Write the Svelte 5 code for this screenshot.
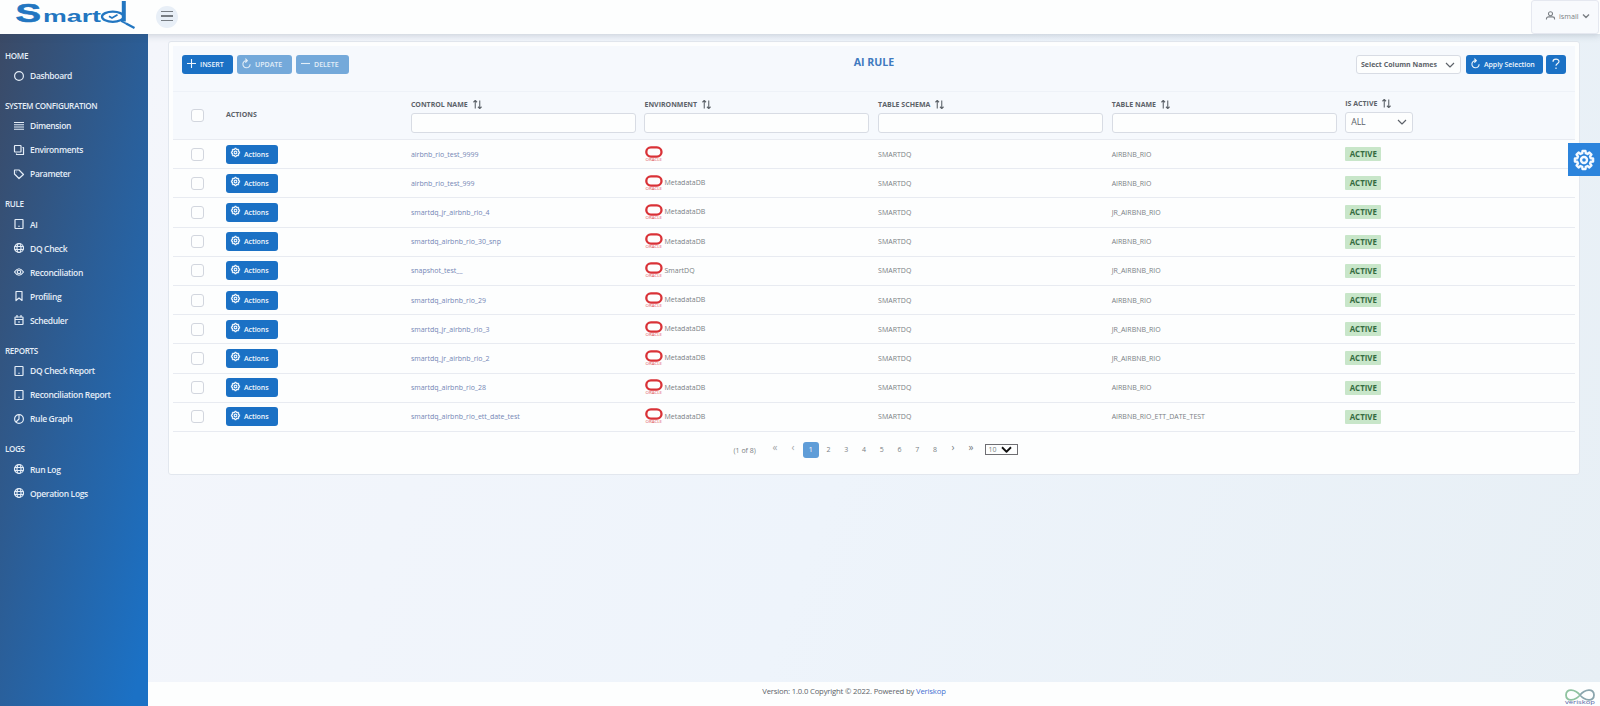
<script lang="ts">
  const menu = [
    { title: 'HOME', items: [['Dashboard', 'circle']] },
    {
      title: 'SYSTEM CONFIGURATION',
      items: [
        ['Dimension', 'bars'],
        ['Environments', 'clone'],
        ['Parameter', 'tag']
      ]
    },
    {
      title: 'RULE',
      items: [
        ['AI', 'tablet'],
        ['DQ Check', 'globe'],
        ['Reconciliation', 'eye'],
        ['Profiling', 'bookmark'],
        ['Scheduler', 'calendar']
      ]
    },
    {
      title: 'REPORTS',
      items: [
        ['DQ Check Report', 'tablet'],
        ['Reconciliation Report', 'tablet'],
        ['Rule Graph', 'chart']
      ]
    },
    {
      title: 'LOGS',
      items: [
        ['Run Log', 'globe'],
        ['Operation Logs', 'globe']
      ]
    }
  ];

  const columns = ['CONTROL NAME', 'ENVIRONMENT', 'TABLE SCHEMA', 'TABLE NAME'];

  const rows = [
    { name: 'airbnb_rio_test_9999', env: '', table: 'AIRBNB_RIO' },
    { name: 'airbnb_rio_test_999', env: 'MetadataDB', table: 'AIRBNB_RIO' },
    { name: 'smartdq_jr_airbnb_rio_4', env: 'MetadataDB', table: 'JR_AIRBNB_RIO' },
    { name: 'smartdq_airbnb_rio_30_snp', env: 'MetadataDB', table: 'AIRBNB_RIO' },
    { name: 'snapshot_test__', env: 'SmartDQ', table: 'JR_AIRBNB_RIO' },
    { name: 'smartdq_airbnb_rio_29', env: 'MetadataDB', table: 'AIRBNB_RIO' },
    { name: 'smartdq_jr_airbnb_rio_3', env: 'MetadataDB', table: 'JR_AIRBNB_RIO' },
    { name: 'smartdq_jr_airbnb_rio_2', env: 'MetadataDB', table: 'JR_AIRBNB_RIO' },
    { name: 'smartdq_airbnb_rio_28', env: 'MetadataDB', table: 'AIRBNB_RIO' },
    { name: 'smartdq_airbnb_rio_ett_date_test', env: 'MetadataDB', table: 'AIRBNB_RIO_ETT_DATE_TEST' }
  ];

  const pages = [1, 2, 3, 4, 5, 6, 7, 8];
  let page = $state(1);

  // 8 rounded teeth around the hub
  const gear = (function () {
    const p: string[] = [];
    for (let i = 0; i < 8; i++) {
      for (const [r, d] of [[7, -15], [9.2, -9], [9.2, 9], [7, 15]]) {
        const a = ((i * 45 + d) * Math.PI) / 180;
        p.push(`${(10 + r * Math.cos(a)).toFixed(2)},${(10 + r * Math.sin(a)).toFixed(2)}`);
      }
    }
    return p.join(' ');
  })();
</script>

{#snippet icon(name: string)}
  <svg class="icon {name}" viewBox="0 0 20 20">
    {#if name === 'circle'}
      <circle cx="10" cy="10" r="8.8" />
    {:else if name === 'bars'}
      <path d="M0 3h20M0 7.500h20M0 12h20M0 16.500h20" />
    {:else if name === 'clone'}
      <rect x="1" y="1" width="13" height="13" rx="1" />
      <path d="M17 5h2v14H5v-2" />
    {:else if name === 'tag'}
      <path d="M1 2v8l9 9 9-8-9-9z" />
      <path d="M5 6h1" />
    {:else if name === 'tablet'}
      <rect x="2" y="1" width="16" height="18" rx="1" />
      <path d="M8.500 14.500h3" />
    {:else if name === 'globe'}
      <circle cx="10" cy="10" r="9" />
      <ellipse cx="10" cy="10" rx="4" ry="9" />
      <path d="M1 7h18M1 13h18" />
    {:else if name === 'eye'}
      <path d="M1 10q9-13 18 0-9 13-18 0z" />
      <circle cx="10" cy="10" r="3.5" />
    {:else if name === 'bookmark'}
      <path d="M4 1h12v18l-6-5-6 5z" />
    {:else if name === 'calendar'}
      <rect x="2" y="4" width="16" height="15" rx="1" />
      <path d="M2 9h16M6 0v5M14 0v5M8 14h4" />
    {:else if name === 'chart'}
      <circle cx="10" cy="10" r="8.8" />
      <path d="M10 1v9l-6 6" />
    {:else if name === 'gear'}
      <polygon points={gear} />
      <circle cx="10" cy="10" r="3" />
    {:else if name === 'plus'}
      <path d="M10 0v20M0 10h20" />
    {:else if name === 'minus'}
      <path d="M0 10h20" />
    {:else if name === 'refresh'}
      <path d="M18 11.500A8 8 0 1 1 11 3.600M7.500-1l4.500 4.600-4.500 4.600" />
    {:else if name === 'sort'}
      <path d="M5 19V1M1 5l4-4 4 4M15 1v18M11 15l4 4 4-4" />
    {:else if name === 'down'}
      <path d="M0 5l10 10L20 5" />
    {:else if name === 'user'}
      <circle cx="10" cy="6" r="4.500" />
      <path d="M1 19v-2q0-4 5-4h8q5 0 5 4v2" />
    {:else if name === 'help'}
      <path d="M4 5.500c0-7 12-7 12-.5 0 4-6 4-6 8.500M10 17v3" />
    {/if}
  </svg>
{/snippet}

<div class="layout">
  <header>
    <svg class="logo" viewBox="0 0 122 32">
      <text class="big" x="0.500" y="22.300" textLength="25.500" lengthAdjust="spacingAndGlyphs">S</text>
      <text class="small" x="28" y="22.300" textLength="58" lengthAdjust="spacingAndGlyphs">mart</text>
      <ellipse cx="97.800" cy="16.700" rx="10.800" ry="5.100" />
      <path class="stem" d="M108.800 1v20.500" />
      <path class="handle" d="M106 21l5 2.500" />
      <path class="grip" d="M111 23.500l8.500 4.500" />
      <path class="tick" d="M94 16.200l3 1.800 5.500-3.200" />
    </svg>
    <button class="toggle" aria-label="Toggle menu">
      <span></span><span></span><span></span>
    </button>
    <div class="account">
      {@render icon('user')}
      <span>ismail</span>
      {@render icon('down')}
    </div>
  </header>

  <div class="body">
    <nav>
      {#each menu as group}
        <section>
          <h4>{group.title}</h4>
          {#each group.items as [label, glyph]}
            <a href="#top">{@render icon(glyph)}<span>{label}</span></a>
          {/each}
        </section>
      {/each}
    </nav>

    <div class="page">
      <main>
        <div class="card">
          <div class="toolbar">
            <div class="tools">
              <button class="btn insert">{@render icon('plus')}INSERT</button>
              <button class="btn update" disabled>{@render icon('refresh')}UPDATE</button>
              <button class="btn delete" disabled>{@render icon('minus')}DELETE</button>
            </div>
            <h1>AI RULE</h1>
            <div class="tools right">
              <div class="select names"><span>Select Column Names</span>{@render icon('down')}</div>
              <button class="btn apply">{@render icon('refresh')}Apply Selection</button>
              <button class="btn ask" aria-label="Help">{@render icon('help')}</button>
            </div>
          </div>

          <div class="row head">
            <div class="pick"><i class="check"></i></div>
            <div class="title actions">ACTIONS</div>
            {#each columns as column}
              <div class="filter">
                <div class="title">{column}{@render icon('sort')}</div>
                <input aria-label={column} />
              </div>
            {/each}
            <div class="filter state">
              <div class="title">IS ACTIVE{@render icon('sort')}</div>
              <div class="select all"><span>ALL</span>{@render icon('down')}</div>
            </div>
          </div>

          {#each rows as row}
            <div class="row">
              <div class="pick"><i class="check"></i></div>
              <div><button class="btn action">{@render icon('gear')}Actions</button></div>
              <div class="name">{row.name}</div>
              <div class="env">
                <svg class="oracle" viewBox="0 0 18 16">
                  <rect x="1.800" y="1.400" width="15.200" height="9.200" rx="4.600" />
                  <text x="1" y="15.400" textLength="16.500" lengthAdjust="spacingAndGlyphs">ORACLE</text>
                </svg>
                <span>{row.env}</span>
              </div>
              <div class="cell">SMARTDQ</div>
              <div class="cell">{row.table}</div>
              <div><span class="badge">ACTIVE</span></div>
            </div>
          {/each}

          <div class="paginator">
            <span class="count">(1 of 8)</span>
            <span class="arrow off">«</span>
            <span class="arrow off">‹</span>
            {#each pages as n}
              <button class="num" class:current={n === page} onclick={() => (page = n)}>{n}</button>
            {/each}
            <span class="arrow">›</span>
            <span class="arrow">»</span>
            <div class="size"><span>10</span>{@render icon('down')}</div>
          </div>
        </div>
      </main>

      <footer>
        <p>Version: 1.0.0 Copyright © 2022. Powered by <a href="#top">Veriskop</a></p>
        <svg class="veriskop" viewBox="0 0 32 18">
          <path class="loop-a" d="M16 7C11 1 2 0 2 7s9 6 14 0" />
          <path class="loop-b" d="M16 7c5-6 14-7 14 0s-9 6-14 0" />
          <text x="1" y="15.500" textLength="30" lengthAdjust="spacingAndGlyphs">veriskop</text>
        </svg>
      </footer>
    </div>
  </div>

  <button class="config" aria-label="Settings">{@render icon('gear')}</button>
</div>

<style>
  :global(body) {
    margin: 0;
  }

  .layout {
    height: 706px;
    display: flex;
    flex-direction: column;
    overflow: hidden;
    font-family: 'Open Sans', sans-serif;
    font-size: 8px;
    color: #7a7f84;
  }

  button {
    font-family: inherit;
    border: 0;
    padding: 0;
    white-space: nowrap;
  }

  .icon {
    width: 10px;
    height: 10px;
    flex: none;
    fill: none;
    stroke: currentColor;
    stroke-width: 2.4;
    stroke-linejoin: round;
    overflow: visible;
  }

  header {
    height: 34px;
    flex: none;
    display: flex;
    align-items: center;
    background: #fdfefe;
    box-shadow: 0 1px 7px rgba(60, 70, 100, 0.25);
    z-index: 2;
  }

  .logo {
    width: 122px;
    height: 32px;
    margin: 0 0 2px 15px;
    overflow: visible;
    fill: #2276c1;
    font-family: 'Liberation Sans', sans-serif;
    font-weight: bold;
  }

  .logo .big {
    font-size: 25px;
    stroke: #2276c1;
    stroke-width: 0.6;
  }

  .logo .small {
    font-size: 17px;
  }

  .logo ellipse,
  .logo path {
    fill: none;
    stroke: #2276c1;
    stroke-width: 2.3;
  }

  .logo .stem {
    stroke-width: 4;
  }

  .logo .tick,
  .logo .handle {
    stroke-width: 1.8;
  }

  .toggle {
    width: 22px;
    height: 22px;
    margin-left: 18.5px;
    border-radius: 50%;
    background: #e8eff7;
    display: flex;
    flex-direction: column;
    align-items: center;
    justify-content: center;
    gap: 3px;
    padding-bottom: 2px;
  }

  .toggle span {
    width: 12px;
    height: 1.3px;
    background: #777d83;
  }

  .account {
    box-sizing: border-box;
    width: 68px;
    height: 34px;
    margin-left: auto;
    margin-right: 1px;
    padding: 0 9px 2px 14px;
    display: flex;
    align-items: center;
    gap: 4px;
    border: 1px solid #e5e8f0;
    border-radius: 3px;
    background: #f8fafd;
    font-size: 7.2px;
  }

  .account .down {
    width: 6px;
    height: 6px;
    margin-left: auto;
    stroke-width: 4.5;
  }

  .account .user {
    width: 9px;
    height: 9px;
    margin-bottom: 2px;
  }

  .body {
    flex: 1;
    display: flex;
    min-height: 0;
  }

  nav {
    width: 148px;
    flex: none;
    box-sizing: border-box;
    padding-top: 13.5px;
    background: linear-gradient(104deg, #3b4a66 0%, #2a5f9a 50%, #1b71c5 95%);
    color: #e4edf7;
  }

  section {
    margin-bottom: 10.1px;
  }

  h4 {
    margin: 0;
    padding-left: 5px;
    font-size: 8.1px;
    font-weight: 600;
    letter-spacing: -0.34px;
    line-height: 16px;
    white-space: nowrap;
  }

  nav a {
    height: 24.1px;
    display: flex;
    align-items: center;
    gap: 6px;
    padding-left: 14px;
    font-size: 8.5px;
    font-weight: 600;
    letter-spacing: -0.34px;
    color: inherit;
    text-decoration: none;
    white-space: nowrap;
  }

  .bars {
    stroke-width: 2.2;
  }

  .page {
    flex: 1;
    display: flex;
    flex-direction: column;
    min-width: 0;
    background: linear-gradient(110deg, #f4f6fb 0%, #eef4fb 50%, #e7eff5 100%);
  }

  main {
    flex: 1;
    padding: 7px 20px 0;
  }

  .card {
    box-sizing: border-box;
    height: 434px;
    padding: 4px 4px 0;
    border: 1px solid #e2e7ee;
    border-radius: 3px;
    background: #fdfefe;
  }

  .toolbar {
    box-sizing: border-box;
    height: 46px;
    display: grid;
    grid-template-columns: 1fr auto 1fr;
    align-items: start;
    padding: 9px 9px 0;
    border-bottom: 1px solid #eef2f8;
    background: #f6f9fd;
  }

  .tools {
    display: flex;
    gap: 4px;
  }

  .right {
    justify-content: flex-end;
    gap: 3px;
  }

  h1 {
    margin: 0;
    font-size: 10.6px;
    font-weight: 700;
    line-height: 15px;
    color: #3f7ac0;
  }

  .btn {
    box-sizing: border-box;
    height: 19px;
    display: flex;
    align-items: center;
    gap: 4px;
    padding: 0 5px;
    border-radius: 3px;
    background: #1b71c5;
    color: #f0f6fc;
    font-size: 7px;
    font-weight: 600;
  }

  .btn .icon {
    width: 9px;
    height: 9px;
    margin-bottom: 3px;
  }

  .btn:disabled {
    background: #74a9da;
    color: #e3eef8;
  }

  .insert {
    width: 51px;
  }

  .update {
    width: 55px;
  }

  .delete {
    width: 53px;
  }

  .apply {
    width: 77px;
    margin-left: 2px;
    letter-spacing: -0.06px;
  }

  .ask {
    width: 20px;
    justify-content: center;
  }

  .ask .help {
    width: 10px;
    height: 10px;
    margin-bottom: 1px;
  }

  .action {
    width: 52px;
    letter-spacing: -0.05px;
  }

  .select {
    box-sizing: border-box;
    display: flex;
    align-items: center;
    justify-content: space-between;
    border: 1px solid #d8dce4;
    border-radius: 3px;
    background: #fdfefe;
    color: #5c6269;
  }

  .select .down {
    width: 8px;
    height: 8px;
    stroke-width: 2.8;
  }

  .names {
    width: 105px;
    height: 19px;
    padding: 0 6px 0 4px;
    font-size: 7px;
    font-weight: 700;
  }

  .all {
    width: 68px;
    height: 21px;
    padding: 0 6px 0 5px;
    font-size: 8.8px;
    letter-spacing: -0.2px;
  }

  .row {
    box-sizing: border-box;
    height: 29.2px;
    display: grid;
    grid-template-columns: 53px 184.9px repeat(4, 233.6px) 1fr;
    align-items: center;
    border-bottom: 1px solid #e8ebf1;
  }

  .head {
    height: 48px;
    background: #f6f9fd;
  }

  .pick {
    padding-left: 18px;
  }

  .check {
    display: block;
    box-sizing: border-box;
    width: 13px;
    height: 13px;
    border: 1px solid #d2d6de;
    border-radius: 3px;
    background: #fdfefe;
  }

  .title {
    display: flex;
    align-items: center;
    gap: 5px;
    font-size: 7px;
    font-weight: 700;
    color: #5c6269;
  }

  .actions {
    padding-bottom: 2px;
  }

  .title .sort {
    width: 9px;
    height: 9px;
    margin-bottom: 1px;
  }

  .filter {
    display: flex;
    flex-direction: column;
    gap: 3px;
    padding-top: 1.5px;
  }

  .state {
    padding-top: 0;
  }

  input {
    box-sizing: border-box;
    width: 225px;
    height: 20px;
    border: 1px solid #d8dce4;
    border-radius: 3px;
    background: #fdfefe;
  }

  .name {
    font-size: 7px;
    color: #7486b5;
  }

  .env {
    display: flex;
    align-items: center;
    gap: 1px;
    font-size: 7px;
    padding-bottom: 1px;
  }

  .oracle {
    width: 19px;
    height: 16px;
    overflow: visible;
  }

  .oracle rect {
    fill: none;
    stroke: #d93237;
    stroke-width: 2.3;
  }

  .oracle text {
    font-size: 3.8px;
    fill: #dd5155;
  }

  .cell {
    font-size: 7px;
  }

  .badge {
    display: inline-block;
    width: 36px;
    height: 14px;
    line-height: 14px;
    text-align: center;
    border-radius: 1px;
    background: #c8e6c9;
    color: #356b41;
    font-size: 7.9px;
    font-weight: 700;
  }

  .paginator {
    height: 36px;
    display: flex;
    align-items: center;
    padding-left: 560.5px;
    font-size: 7px;
  }

  .count {
    width: 32.5px;
    padding-top: 2px;
    white-space: nowrap;
  }

  .arrow {
    width: 18px;
    text-align: center;
    font-size: 10px;
    padding-bottom: 6px;
  }

  .off {
    opacity: 0.7;
  }

  .num {
    width: 15.75px;
    height: 16px;
    margin: 0 1px;
    border-radius: 3px;
    background: none;
    color: inherit;
    font-size: 7px;
  }

  .current {
    background: #5f9dd8;
    color: #fff;
  }

  .size {
    box-sizing: border-box;
    width: 33px;
    height: 11px;
    margin-left: 4.5px;
    padding: 0 6px 0 3px;
    display: flex;
    align-items: center;
    justify-content: space-between;
    border: 1px solid #6e6e72;
  }

  .size .down {
    width: 9px;
    height: 9px;
    color: #111;
    stroke-width: 4;
  }

  footer {
    height: 24px;
    display: flex;
    justify-content: center;
    padding-right: 40px;
    background: #fdfefe;
    position: relative;
  }

  footer p {
    margin: 0;
    font-size: 7.7px;
    letter-spacing: -0.17px;
    line-height: 18px;
    color: #5c6269;
  }

  footer a {
    color: #3f6fd1;
    text-decoration: none;
  }

  .veriskop {
    position: absolute;
    right: 4px;
    bottom: 0;
    width: 32px;
    height: 18px;
    fill: none;
  }

  .loop-a {
    stroke: #8fc3a0;
    stroke-width: 1.8;
  }

  .loop-b {
    stroke: #8aa5ad;
    stroke-width: 1.8;
  }

  .veriskop text {
    font-size: 6px;
    fill: #5765a5;
  }

  .config {
    position: absolute;
    top: 143px;
    right: 0;
    width: 32px;
    height: 33px;
    display: flex;
    align-items: center;
    justify-content: center;
    background: #2c84dc;
    color: #f4f9ff;
    z-index: 3;
  }

  .config .icon {
    width: 20px;
    height: 20px;
  }
</style>
